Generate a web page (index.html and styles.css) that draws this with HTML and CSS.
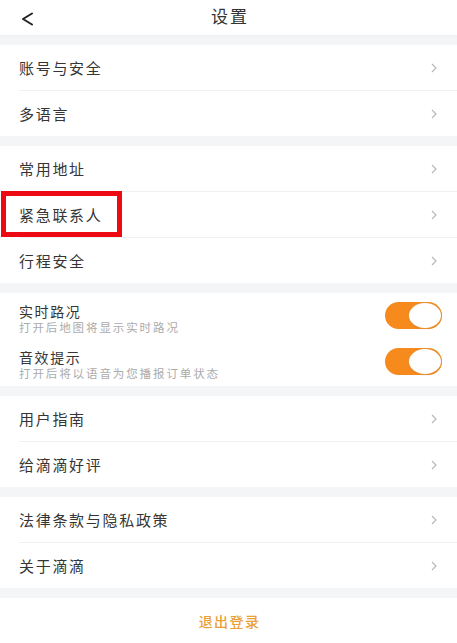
FILE: index.html
```html
<!DOCTYPE html>
<html lang="zh-CN">
<head>
<meta charset="utf-8">
<title>设置</title>
<link rel="stylesheet" href="styles.css">
</head>
<body>
<div class="page">
  <header class="nav">
    <span class="back">
      <svg width="14" height="14" viewBox="0 0 14 14"><polyline points="11,1.5 2,7 11,12.5" fill="none" stroke="#222" stroke-width="2" stroke-linecap="round" stroke-linejoin="round"/></svg>
    </span>
    <h1 class="title">设置</h1>
  </header>

  <section class="group">
    <div class="row"><span class="label">账号与安全</span><svg class="chev" width="6" height="10" viewBox="0 0 6 10"><polyline points="1,1 5,5 1,9" fill="none" stroke="#b9b9b9" stroke-width="1.2"/></svg></div>
    <div class="row"><span class="label">多语言</span><svg class="chev" width="6" height="10" viewBox="0 0 6 10"><polyline points="1,1 5,5 1,9" fill="none" stroke="#b9b9b9" stroke-width="1.2"/></svg></div>
  </section>

  <section class="group">
    <div class="row"><span class="label">常用地址</span><svg class="chev" width="6" height="10" viewBox="0 0 6 10"><polyline points="1,1 5,5 1,9" fill="none" stroke="#b9b9b9" stroke-width="1.2"/></svg></div>
    <div class="row marked"><span class="highlight"></span><span class="label">紧急联系人</span><svg class="chev" width="6" height="10" viewBox="0 0 6 10"><polyline points="1,1 5,5 1,9" fill="none" stroke="#b9b9b9" stroke-width="1.2"/></svg></div>
    <div class="row"><span class="label">行程安全</span><svg class="chev" width="6" height="10" viewBox="0 0 6 10"><polyline points="1,1 5,5 1,9" fill="none" stroke="#b9b9b9" stroke-width="1.2"/></svg></div>
  </section>

  <section class="group toggles">
    <div class="toggle-row">
      <div class="texts">
        <div class="t-title">实时路况</div>
        <div class="t-sub">打开后地图将显示实时路况</div>
      </div>
      <span class="switch"><span class="knob"></span></span>
    </div>
    <div class="toggle-row">
      <div class="texts">
        <div class="t-title">音效提示</div>
        <div class="t-sub">打开后将以语音为您播报订单状态</div>
      </div>
      <span class="switch"><span class="knob"></span></span>
    </div>
  </section>

  <section class="group">
    <div class="row"><span class="label">用户指南</span><svg class="chev" width="6" height="10" viewBox="0 0 6 10"><polyline points="1,1 5,5 1,9" fill="none" stroke="#b9b9b9" stroke-width="1.2"/></svg></div>
    <div class="row"><span class="label">给滴滴好评</span><svg class="chev" width="6" height="10" viewBox="0 0 6 10"><polyline points="1,1 5,5 1,9" fill="none" stroke="#b9b9b9" stroke-width="1.2"/></svg></div>
  </section>

  <section class="group">
    <div class="row"><span class="label">法律条款与隐私政策</span><svg class="chev" width="6" height="10" viewBox="0 0 6 10"><polyline points="1,1 5,5 1,9" fill="none" stroke="#b9b9b9" stroke-width="1.2"/></svg></div>
    <div class="row"><span class="label">关于滴滴</span><svg class="chev" width="6" height="10" viewBox="0 0 6 10"><polyline points="1,1 5,5 1,9" fill="none" stroke="#b9b9b9" stroke-width="1.2"/></svg></div>
  </section>

  <section class="group logout">
    <span class="logout-text">退出登录</span>
  </section>
</div>
</body>
</html>
```

FILE: styles.css
```css
* {
  box-sizing: border-box;
}

html, body {
  margin: 0;
  padding: 0;
}

body {
  background: #f4f5f7;
  font-family: "Noto Sans CJK SC", "Noto Sans", "Liberation Sans", sans-serif;
  color: #333;
}

.page {
  width: 457px;
  height: 643px;
  overflow: hidden;
  display: flex;
  flex-direction: column;
}

.nav {
  height: 35px;
  flex: none;
  background: #fff;
  display: flex;
  align-items: center;
  justify-content: center;
  position: relative;
  box-shadow: 0 1px 3px rgba(0, 0, 0, 0.04);
}

.back {
  position: absolute;
  left: 21px;
  top: 12px;
  width: 14px;
  height: 14px;
  display: flex;
}

.title {
  margin: 0 0 3px 3px;
  font-size: 17px;
  font-weight: 400;
  letter-spacing: 2px;
  line-height: 22px;
  color: #333;
}

.group {
  background: #fff;
  margin-top: 10px;
  flex: none;
}

.row {
  margin-left: 19px;
  padding-right: 20px;
  height: 46px;
  border-top: 1px solid #f0f0f0;
  display: flex;
  align-items: center;
  justify-content: space-between;
  position: relative;
}

.row:first-child {
  border-top: none;
  height: 45px;
}

.label {
  font-size: 15px;
  letter-spacing: 1.7px;
  color: #353535;
  line-height: 20px;
}

.chev {
  display: block;
  flex: none;
}

.highlight {
  position: absolute;
  left: -18px;
  top: -1px;
  width: 121px;
  height: 46px;
  border: 5px solid #ee0a12;
  pointer-events: none;
}

.toggles {
  padding-bottom: 1px;
}

.toggle-row {
  height: 46px;
  padding: 10px 15px 0 19px;
  display: flex;
  justify-content: space-between;
  align-items: flex-start;
}

.texts {
  display: flex;
  flex-direction: column;
}

.t-title {
  font-size: 14px;
  line-height: 17px;
  letter-spacing: 1.6px;
  color: #353535;
}

.t-sub {
  font-size: 11.5px;
  line-height: 14px;
  letter-spacing: 1.9px;
  color: #ababab;
}

.switch {
  margin-top: -1px;
  width: 57px;
  height: 27px;
  border-radius: 14px;
  background: #f68a1d;
  display: flex;
  align-items: center;
  justify-content: flex-end;
  padding: 0 1px;
}

.knob {
  width: 32px;
  height: 25px;
  border-radius: 50%;
  background: #fff;
  box-shadow: 0 0 0 1px #e99233, 0 1px 2px rgba(0, 0, 0, 0.15);
}

.logout {
  height: 45px;
  display: flex;
  align-items: center;
  justify-content: center;
}

.logout-text {
  font-size: 14px;
  font-weight: 500;
  letter-spacing: 1.4px;
  color: #eaa035;
  margin-left: 2px;
}
```
